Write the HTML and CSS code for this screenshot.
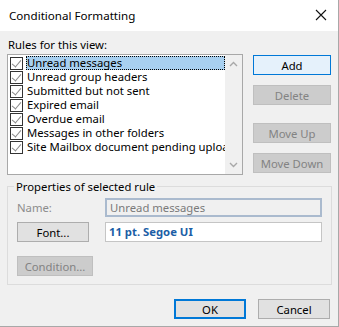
FILE: index.html
```html
<!DOCTYPE html>
<html lang="en">
<head>
  <meta charset="UTF-8" />
  <title>Conditional Formatting</title>
  <link rel="stylesheet" href="styles.css">
</head>
<body>

  <div class="dialog">
    <div class="titlebar">
      <span class="title">Conditional Formatting</span>
      <svg class="close" width="12" height="12" viewBox="0 0 12 12">
        <path d="M1 1 L11 11 M11 1 L1 11" stroke="#111" stroke-width="1.1" fill="none"/>
      </svg>
    </div>

    <div class="content">
      <div class="label">Rules for this view:</div>

      <div class="rules-row">
        <div class="listbox">
          <ul class="rules">
            <li class="selected"><span class="check"></span><span class="text">Unread messages</span></li>
            <li><span class="check"></span><span class="text">Unread group headers</span></li>
            <li><span class="check"></span><span class="text">Submitted but not sent</span></li>
            <li><span class="check"></span><span class="text">Expired email</span></li>
            <li><span class="check"></span><span class="text">Overdue email</span></li>
            <li><span class="check"></span><span class="text">Messages in other folders</span></li>
            <li><span class="check"></span><span class="text">Site Mailbox document pending upload</span></li>
          </ul>
          <div class="scrollbar">
            <svg width="9" height="6" viewBox="0 0 9 6"><path d="M1 5 L4.5 1.5 L8 5" stroke="#a8a8a8" stroke-width="1.4" fill="none"/></svg>
            <svg width="9" height="6" viewBox="0 0 9 6"><path d="M1 1 L4.5 4.5 L8 1" stroke="#a8a8a8" stroke-width="1.4" fill="none"/></svg>
          </div>
        </div>

        <div class="side-buttons">
          <button class="btn focus">Add</button>
          <button class="btn" disabled>Delete</button>
          <button class="btn gap" disabled>Move Up</button>
          <button class="btn" disabled>Move Down</button>
        </div>
      </div>

      <fieldset class="props">
        <legend>Properties of selected rule</legend>
        <div class="prop-row">
          <span class="name-label">Name:</span>
          <div class="name-field">Unread messages</div>
        </div>
        <div class="prop-row">
          <button class="btn font-btn">Font...</button>
          <div class="font-field">11 pt. Segoe UI</div>
        </div>
        <div class="prop-row">
          <button class="btn cond-btn" disabled>Condition...</button>
        </div>
      </fieldset>

      <div class="footer">
        <button class="btn ok">OK</button>
        <button class="btn">Cancel</button>
      </div>
    </div>
  </div>

</body>
</html>
```

FILE: styles.css
```css
* {
  margin: 0;
  padding: 0;
  box-sizing: border-box;
}

body {
  font-family: 'Noto Sans', 'Open Sans', sans-serif;
  font-size: 11.3px;
  color: #000;
  background: #fff;
}

.dialog {
  width: 339px;
  height: 327px;
  border-right: 1px solid #a8a8a8;
  border-bottom: 1px solid #a8a8a8;
  display: flex;
  flex-direction: column;
}

.titlebar {
  height: 31px;
  flex: none;
  background: #fff;
  display: flex;
  align-items: center;
  justify-content: space-between;
  padding: 0 11px 1px 9px;
}

.title {
  font-size: 11.6px;
}

.content {
  flex: 1;
  background: #f0f0f0;
  padding: 6px 7px 0 7px;
}

.label {
  line-height: 15px;
  height: 17px;
  padding-left: 1px;
}

.rules-row {
  display: flex;
  gap: 10px;
}

.listbox {
  width: 236px;
  height: 121px;
  border: 1px solid #a8a8a8;
  background: #fff;
  display: flex;
}

.rules {
  list-style: none;
  flex: 1;
  min-width: 0;
  padding: 1px 0 0 2px;
  overflow: hidden;
}

.rules li {
  height: 14px;
  display: flex;
  align-items: center;
  white-space: nowrap;
}

.check {
  width: 13px;
  height: 13px;
  flex: none;
  border: 1px solid #333;
  background: #fff;
  margin-right: 3px;
  position: relative;
}

.check::after {
  content: "";
  position: absolute;
  left: 3px;
  top: 0px;
  width: 4px;
  height: 8px;
  border-right: 1.5px solid #8a8a8a;
  border-bottom: 1.5px solid #8a8a8a;
  transform: rotate(40deg);
}

.text {
  height: 14px;
  line-height: 14px;
  padding: 0 1px;
  overflow: hidden;
}

.rules li.selected .text {
  flex: 1;
  background: #a8d0f0;
  outline: 1px dotted #000;
  outline-offset: -1px;
}

.scrollbar {
  width: 17px;
  flex: none;
  background: #f0f0f0;
  display: flex;
  flex-direction: column;
  justify-content: space-between;
  align-items: center;
  padding: 6px 0 6px;
}

.side-buttons {
  display: flex;
  flex-direction: column;
  width: 78px;
  padding-top: 1px;
  gap: 10px;
}

.btn {
  font-family: inherit;
  font-size: 11.3px;
  height: 20px;
  background: #e1e1e1;
  border: 1px solid #adadad;
  color: #000;
}

.btn:disabled {
  background: #cccccc;
  border-color: #bfbfbf;
  color: #838383;
}

.btn.focus {
  background: #e5f1fb;
  border-color: #0078d7;
}

.btn.gap {
  margin-top: 8px;
}

.props {
  margin-top: 4px;
  width: 325px;
  height: 106px;
  border: 1px solid #dcdcdc;
  padding: 4px 8px 0 9px;
}

.props legend {
  margin-left: -3px;
  padding: 0 2px;
  line-height: 15px;
}

.prop-row {
  display: flex;
  align-items: center;
  gap: 16px;
  margin-bottom: 5px;
}

.name-label {
  width: 72px;
  color: #8c8c8c;
}

.name-field {
  width: 217px;
  height: 19px;
  border: 2px solid #aabace;
  background: #f0f0f0;
  color: #7a7a7a;
  line-height: 15px;
  padding-left: 3px;
}

.font-btn {
  width: 72px;
}

.font-field {
  width: 217px;
  height: 20px;
  border: 1px solid #c5c5c5;
  background: #fff;
  color: #1b5ea6;
  font-weight: bold;
  line-height: 18px;
  padding-left: 3px;
}

.cond-btn {
  width: 76px;
  margin-top: 9px;
}

.footer {
  display: flex;
  justify-content: flex-end;
  gap: 12px;
  padding: 14px 1px 0 0;
}

.footer .btn {
  width: 72px;
}

.btn.ok {
  border: 2px solid #0078d7;
}
```
